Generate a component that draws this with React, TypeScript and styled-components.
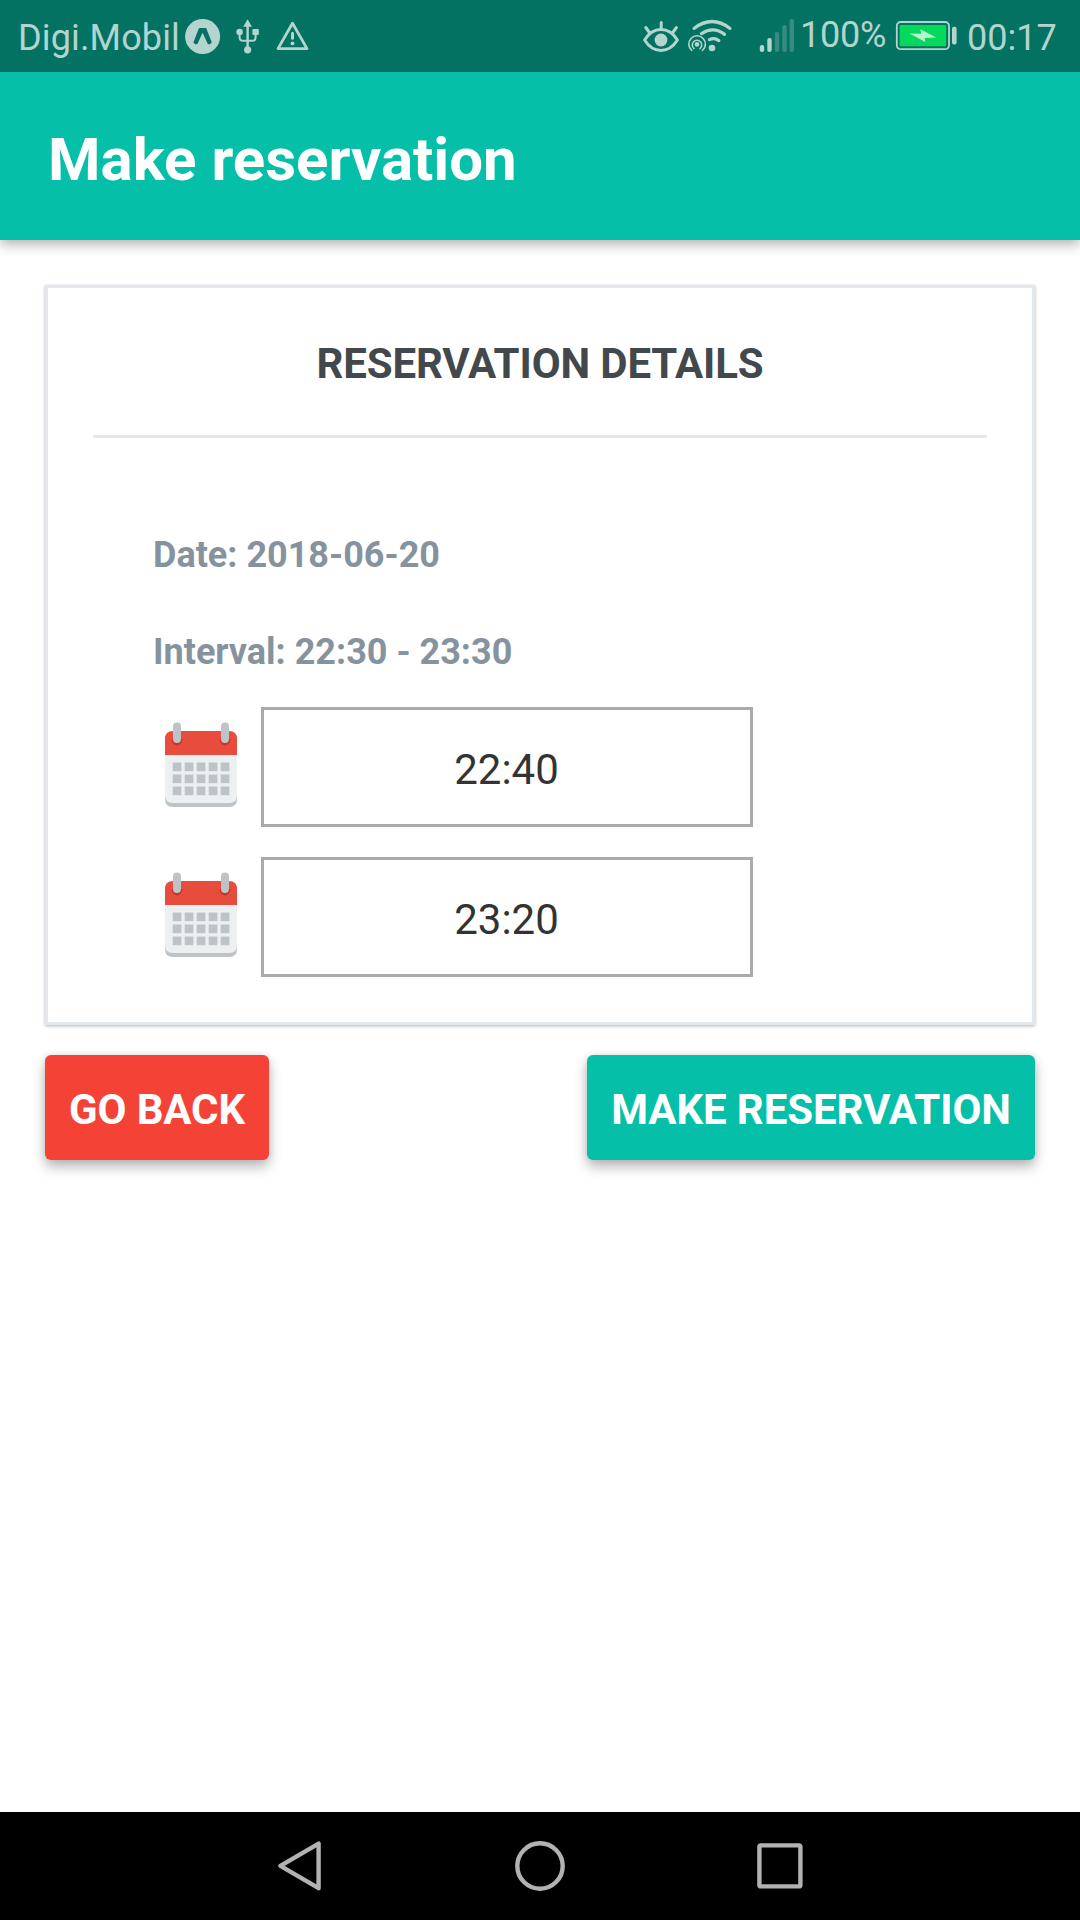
import React from "react";
import styled, { createGlobalStyle } from "styled-components";

const ink = "#b3d4cf";

const GlobalStyle = createGlobalStyle`
  * { box-sizing: border-box; }
  body { margin: 0; background: #fff; font-family: Roboto, "Noto Sans", sans-serif; }
`;

const Screen = styled.div`
  width: 1080px;
  height: 1920px;
  display: flex;
  flex-direction: column;
  background: #fff;
  overflow: hidden;
`;

const StatusBar = styled.div`
  height: 72px;
  flex: none;
  z-index: 1;
  display: flex;
  justify-content: space-between;
  padding-left: 18px;
  background: #037263;
  color: ${ink};
`;

const StatusGroup = styled.div`
  display: flex;
  align-items: flex-start;
  svg { display: block; flex: none; }
`;

const StatusText = styled.span<{ $top: number; $width: number; $spacing?: number }>`
  font-size: 36px;
  line-height: 42px;
  padding-top: ${(p) => p.$top}px;
  width: ${(p) => p.$width}px;
  letter-spacing: ${(p) => p.$spacing ?? 0}px;
  white-space: nowrap;
`;

const Header = styled.header`
  height: 168px;
  flex: none;
  display: flex;
  align-items: center;
  padding: 7px 48px 0;
  background: #05bfa8;
  box-shadow: 0 4px 12px rgba(0, 0, 0, 0.32);
`;

const HeaderTitle = styled.h1`
  margin: 0;
  font-size: 60px;
  line-height: 70px;
  font-weight: 700;
  color: #fff;
`;

const Content = styled.main`
  flex: 1;
  padding: 45px 45px 0;
`;

const Card = styled.section`
  height: 740px;
  border: 3px solid #e1e8ee;
  padding: 0 45px;
  background: #fff;
  box-shadow: 0 1px 3px rgba(0, 0, 0, 0.3);
`;

const CardTitle = styled.h2`
  margin: 0;
  height: 150px;
  padding-top: 51px;
  border-bottom: 3px solid #e1e8ee;
  text-align: center;
  font-size: 42px;
  line-height: 49px;
  font-weight: 700;
  letter-spacing: -0.14px;
  color: #43484d;
`;

const Details = styled.div`
  padding: 96px 60px 0;
`;

const DetailText = styled.p`
  margin: 0 0 55px;
  font-size: 36px;
  line-height: 42px;
  font-weight: 700;
  color: #86939e;
`;

const Pickers = styled.div`
  display: flex;
  flex-direction: column;
  gap: 30px;
  margin-top: -21px;
`;

const PickerRow = styled.div`
  display: flex;
  height: 120px;
`;

const CalendarBox = styled.div`
  width: 108px;
  padding: 12px 0 0 12px;
  svg { display: block; }
`;

const TimeInput = styled.div`
  width: 492px;
  height: 120px;
  border: 3px solid #aaa;
  display: flex;
  align-items: center;
  justify-content: center;
  padding: 5px 1px 0 0;
  font-size: 42px;
  line-height: 49px;
  color: #333;
`;

const Actions = styled.div`
  display: flex;
  justify-content: space-between;
  margin-top: 30px;
`;

const ActionButton = styled.button<{ $color: string; $width: number }>`
  width: ${(p) => p.$width}px;
  height: 105px;
  border: 0;
  border-radius: 6px;
  padding: 4px 0 0;
  background: ${(p) => p.$color};
  color: #fff;
  font-family: inherit;
  font-size: 42px;
  line-height: 49px;
  font-weight: 700;
  letter-spacing: -0.1px;
  white-space: nowrap;
  box-shadow: 0 7px 13px rgba(0, 0, 0, 0.27), 0 0 7px rgba(0, 0, 0, 0.1);
`;

const NavBar = styled.nav`
  height: 108px;
  flex: none;
  display: flex;
  justify-content: center;
  align-items: center;
  gap: 180px;
  background: #000;
  svg { display: block; }
`;

function CalendarIcon() {
  return (
    <svg width="84" height="96" viewBox="0 0 84 96">
      <path d="M0 80V76H72V80Q72 88 64 88H8Q0 88 0 80Z" fill="#bdc3c7" />
      <path d="M0 34H72V76Q72 84 64 84H8Q0 84 0 76Z" fill="#ecf0f1" />
      <path d="M0 36V20Q0 12 8 12H64Q72 12 72 20V36Z" fill="#e84c3d" />
      <g fill="#c1392b">
        <path d="M6.5 20a5.5 6.5 0 1 0 11 0z" />
        <path d="M54.5 20a5.5 6.5 0 1 0 11 0z" />
      </g>
      <g fill="#bdc3c7">
        <rect x="8" y="3.5" width="8" height="20.5" rx="4" />
        <rect x="56" y="3.5" width="8" height="20.5" rx="4" />
        {[43.5, 55.5, 67.5].map((y) =>
          [7.7, 19.7, 31.7, 43.7, 55.7].map((x) => (
            <rect key={`${x}-${y}`} x={x} y={y} width="8.7" height="8.7" />
          ))
        )}
      </g>
    </svg>
  );
}

function ExpoIcon() {
  return (
    <svg width="36" height="72" viewBox="185 0 36 72">
      <circle cx="202.6" cy="36.5" r="17.5" fill={ink} />
      <path
        d="M199.8 28h5.6q.8 0 1.2 1l5.2 13.4-2.2 2.2-1.9-.9-5.1-11-5.1 11-1.9.9-2.2-2.2 5.2-13.4q.4-1 1.2-1z"
        fill="#037263"
      />
    </svg>
  );
}

function UsbIcon() {
  return (
    <svg width="54" height="72" viewBox="221 0 54 72">
      <g fill="none" stroke={ink} strokeWidth="2">
        <path d="M247.6 25V48" strokeWidth="2.4" />
        <path d="M239.6 33v4.2q0 3.6 3.6 3.6h8.8q3.6 0 3.6-3.6V33" />
      </g>
      <g fill={ink}>
        <path d="M247.6 19.2l4.4 7.6h-8.8z" />
        <circle cx="239.6" cy="32" r="3.3" />
        <rect x="252.4" y="29" width="6.4" height="6" rx="1" />
        <circle cx="247.6" cy="49.8" r="3.6" />
      </g>
    </svg>
  );
}

function WarningIcon() {
  return (
    <svg width="36" height="72" viewBox="275 0 36 72">
      <path d="M292.5 23.3L307 48.6H278z" fill="none" stroke={ink} strokeWidth="2.8" strokeLinejoin="round" />
      <path d="M292.5 33.2v5" stroke={ink} strokeWidth="3" strokeLinecap="round" />
      <circle cx="292.5" cy="43.4" r="1.9" fill={ink} />
    </svg>
  );
}

function EyeIcon() {
  return (
    <svg width="44" height="72" viewBox="642 0 44 72">
      <g fill="none" stroke={ink} strokeWidth="3" strokeLinecap="round">
        <path d="M644.6 40Q651 29.6 661 29.6T677.4 40Q671 50.4 661 50.4T644.6 40Z" strokeLinejoin="round" />
        <path d="M661.2 22.5V29M645.8 27.5l3.6 5M676.4 27.5l-3.6 5" />
      </g>
      <circle cx="661" cy="40" r="6.4" fill={ink} />
    </svg>
  );
}

function WifiIcon() {
  return (
    <svg width="72" height="72" viewBox="686 0 72 72">
      <g fill="none" stroke={ink} strokeLinecap="round">
        <path d="M694 28.4Q712 14.6 730 28.4M701.5 33.6Q713.5 26 724.6 34.4M709.5 39.6Q714.5 37.4 718.8 40.6" strokeWidth="3.2" />
        <path d="M691.8 50.5A8.3 8.3 0 1 1 702.4 50.5" strokeWidth="1.6" />
        <path d="M694 48.6A4.7 4.7 0 1 1 700 48.6" strokeWidth="1.6" />
      </g>
      <circle cx="697" cy="44.4" r="2.3" fill={ink} />
      <circle cx="712" cy="48" r="3.3" fill={ink} />
    </svg>
  );
}

function SignalIcon() {
  return (
    <svg width="42" height="72" viewBox="758 0 42 72">
      <g fill={ink}>
        <rect x="759.8" y="45" width="4.4" height="7" rx="2" />
        <rect x="767.3" y="38" width="4.4" height="14" rx="2" />
      </g>
      <g fill="#368c80">
        <rect x="774.8" y="32" width="4.4" height="20" rx="2" />
        <rect x="782.3" y="25" width="4.4" height="27" rx="2" />
        <rect x="789.6" y="19" width="4.4" height="33" rx="2" />
      </g>
    </svg>
  );
}

function BatteryIcon() {
  return (
    <svg width="72" height="72" viewBox="895 0 72 72">
      <rect x="896.8" y="22" width="52.2" height="27.2" rx="4" fill="none" stroke={ink} strokeWidth="1.8" />
      <rect x="899.6" y="25" width="46.6" height="21.2" rx="1" fill="#04d95c" />
      <path d="M909.5 33.4l11.6.4-.7-4.6 15.7 8.2-11.4.5.6 4z" fill="#b4f4ce" />
      <rect x="952" y="26.8" width="4.6" height="17.6" rx="2" fill={ink} />
    </svg>
  );
}

const navStroke = { fill: "none", stroke: "#b2b2b2", strokeWidth: 4.4, strokeLinejoin: "round" as const };

export default function App() {
  return (
    <>
      <GlobalStyle />
      <Screen>
        <StatusBar>
          <StatusGroup>
            <StatusText $top={17} $width={167} $spacing={0.15}>Digi.Mobil</StatusText>
            <ExpoIcon />
            <UsbIcon />
            <WarningIcon />
          </StatusGroup>
          <StatusGroup>
            <EyeIcon />
            <WifiIcon />
            <SignalIcon />
            <StatusText $top={14} $width={95} $spacing={-0.2}>100%</StatusText>
            <BatteryIcon />
            <StatusText $top={17} $width={113}>00:17</StatusText>
          </StatusGroup>
        </StatusBar>
        <Header>
          <HeaderTitle>Make reservation</HeaderTitle>
        </Header>
        <Content>
          <Card>
            <CardTitle>RESERVATION DETAILS</CardTitle>
            <Details>
              <DetailText>Date: 2018-06-20</DetailText>
              <DetailText>Interval: 22:30 - 23:30</DetailText>
              <Pickers>
                {["22:40", "23:20"].map((time) => (
                  <PickerRow key={time}>
                    <CalendarBox>
                      <CalendarIcon />
                    </CalendarBox>
                    <TimeInput>{time}</TimeInput>
                  </PickerRow>
                ))}
              </Pickers>
            </Details>
          </Card>
          <Actions>
            <ActionButton $color="#f44336" $width={224}>GO BACK</ActionButton>
            <ActionButton $color="#05bfa8" $width={448}>MAKE RESERVATION</ActionButton>
          </Actions>
        </Content>
        <NavBar>
          <svg width="60" height="60" viewBox="270 1836 60 60">
            <path d="M318.6 1843.6V1888.2L280.4 1865.9Z" {...navStroke} />
          </svg>
          <svg width="60" height="60" viewBox="510 1836 60 60">
            <circle cx="540" cy="1866" r="22.7" {...navStroke} />
          </svg>
          <svg width="60" height="60" viewBox="750 1836 60 60">
            <rect x="759.4" y="1845.4" width="41" height="41" rx="1.5" {...navStroke} />
          </svg>
        </NavBar>
      </Screen>
    </>
  );
}
